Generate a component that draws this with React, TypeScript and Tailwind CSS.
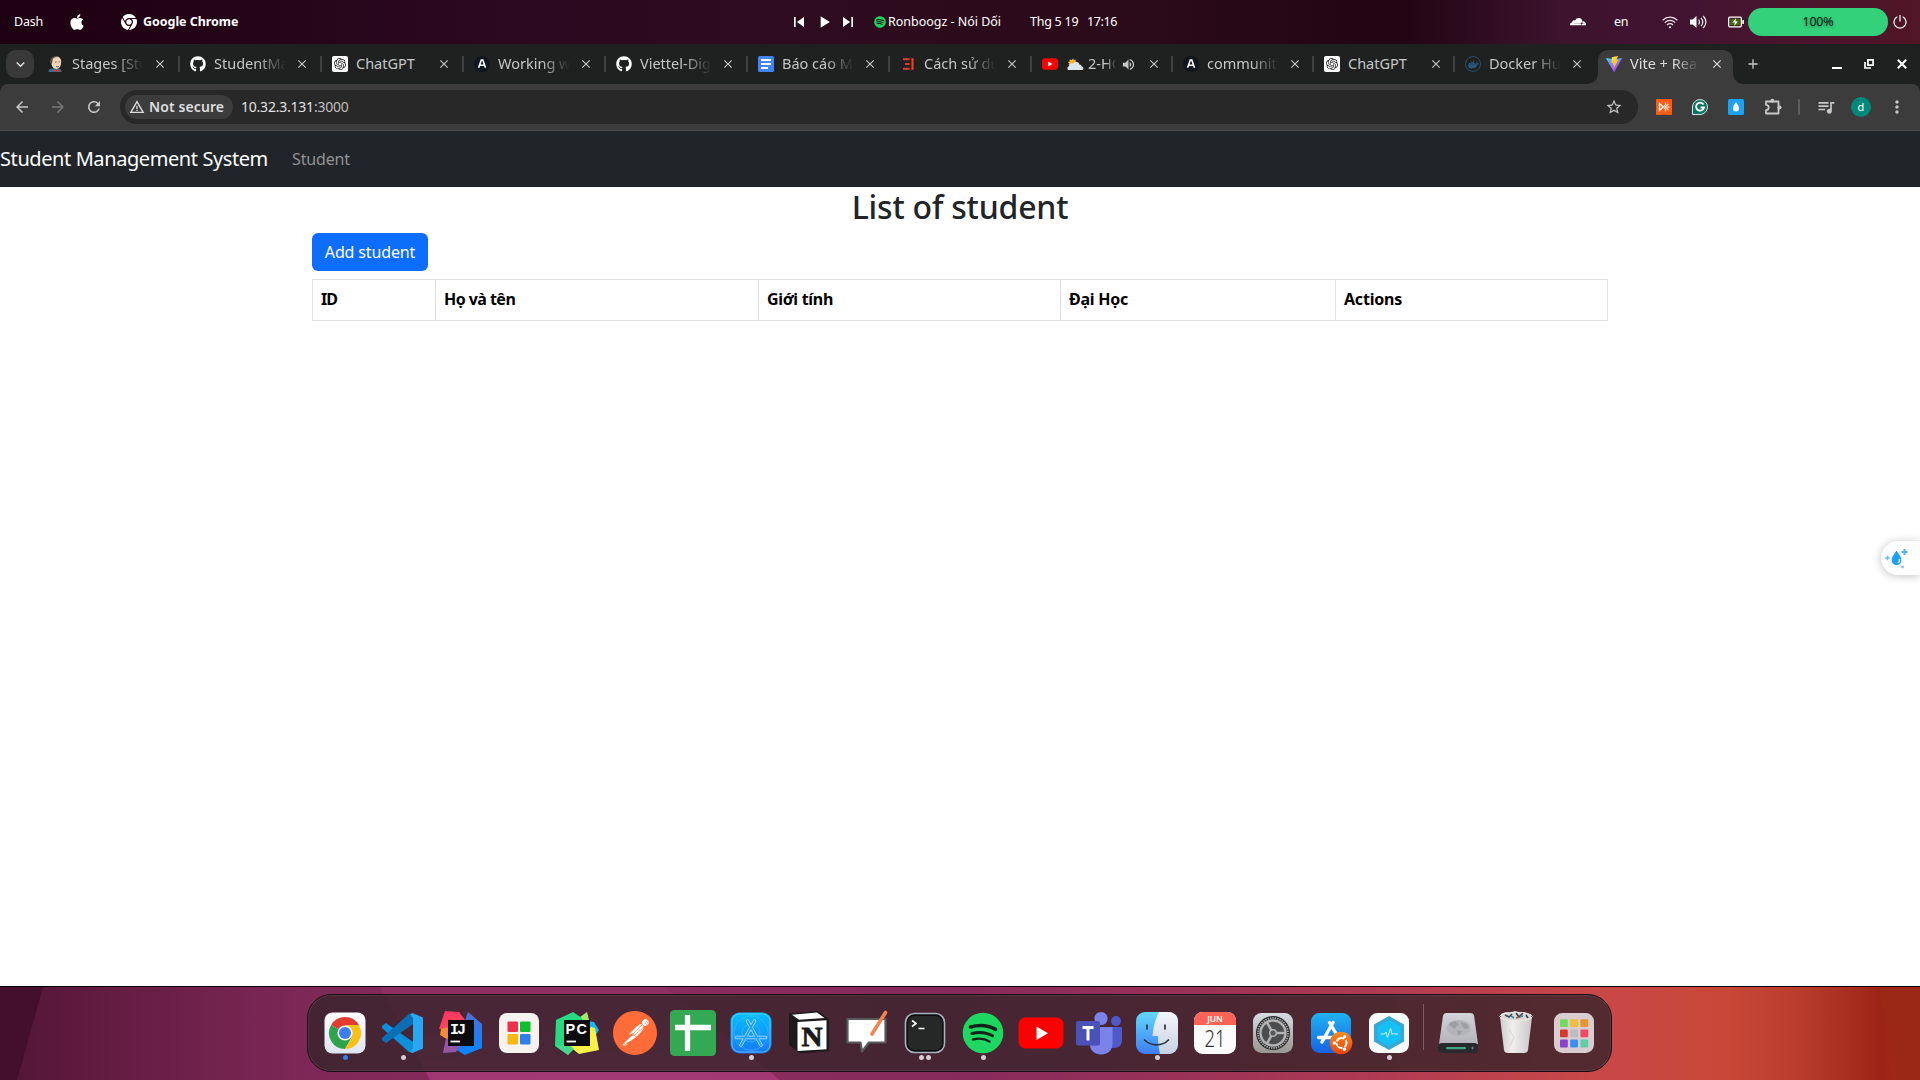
import React from "react";
import { FaApple, FaGithub, FaChrome, FaCloudflare, FaSpotify } from "react-icons/fa6";
import { SiOpenai, SiPostman, SiDocker } from "react-icons/si";
import {
  MdArrowBack, MdArrowForward, MdRefresh, MdStarBorder, MdQueueMusic, MdMoreVert,
  MdSkipPrevious, MdPlayArrow, MdSkipNext, MdClose, MdAdd,
  MdWarningAmber, MdExpandMore, MdVolumeUp,
} from "react-icons/md";

/* ---------- Tab favicons ---------- */

const Jenkins = () => (
  <svg viewBox="0 0 16 16" className="size-4">
    <path d="M.5 16c0-3 2-3.500 5-3.500h5c2 0 3 1.500 3 3.500z" fill="#3d6f8e" />
    <path d="M3.200 4C3.500 1.500 6 .4 8.200.4c3 0 5 2 5 5.200 0 4-1.500 7.400-4.700 7.400C5 13 3 10 3.200 4z" fill="#f0d6b7" />
    <path d="M2.300 7C1.500 3 4 .2 7.500.2c1.500 0 2.500.4 3.200 1C8 .8 5 1.500 4.600 4L4 8z" fill="#5a504b" />
    <path d="M7 6h1.600M10.600 6H12M8 10.300c1 .7 2 .6 3 0" stroke="#5c4c40" strokeWidth=".9" fill="none" />
    <path d="M6.500 13l2.600 1.200 2.700-1.200v3l-2.700-1-2.600 1z" fill="#d33833" />
  </svg>
);

const Astro = () => (
  <span className="flex size-4 items-center justify-center rounded-full bg-[#10161f]">
    <svg viewBox="0 0 16 16" className="size-4">
      <path d="M4.600 11.800L7.300 4h1.500l2.700 7.800M6 9.300h4" stroke="#fff" strokeWidth="1.600" fill="none" />
    </svg>
  </span>
);

const Gpt = () => (
  <span className="flex size-4 items-center justify-center rounded-[2px] bg-white">
    <SiOpenai className="size-3 text-[#222]" />
  </span>
);

const Docs = () => (
  <svg viewBox="0 0 16 16" className="size-4">
    <rect width="16" height="16" rx="1.500" fill="#4285f4" />
    <path d="M3 4h10M3 8h10M3 12h7" stroke="#fff" strokeWidth="1.800" />
  </svg>
);

const Viblo = () => (
  <svg viewBox="0 0 16 16" className="size-4">
    <path d="M3 3.200h6.500M5 8h4.500M3 12.800h6.500" stroke="#e8372c" strokeWidth="2" />
    <path d="M12.500 2.200v11.600" stroke="#f03b30" strokeWidth="2.200" />
  </svg>
);

const YoutubeSmall = () => (
  <svg viewBox="0 0 16 16" className="size-4">
    <rect y="2.300" width="16" height="11.400" rx="3" fill="#f00" />
    <path d="M6.300 5.600v4.800L10.500 8z" fill="#fff" />
  </svg>
);

const Docker = () => (
  <span className="flex size-4 items-center justify-center rounded-full border border-[#245070]">
    <SiDocker className="size-[11px] text-[#2a587a]" />
  </span>
);

const Vite = () => (
  <svg viewBox="0 0 16 16" className="size-4">
    <defs>
      <linearGradient id="vite-a" x1="0" y1="0" x2=".6" y2="1">
        <stop offset="0" stopColor="#41d1ff" />
        <stop offset="1" stopColor="#bd34fe" />
      </linearGradient>
      <linearGradient id="vite-b" x1=".3" y1="0" x2=".6" y2="1">
        <stop offset="0" stopColor="#ffea83" />
        <stop offset=".1" stopColor="#ffdd35" />
        <stop offset="1" stopColor="#ffa800" />
      </linearGradient>
    </defs>
    <path d="M15.900 2.600L8.400 15.800a.4.400 0 0 1-.7 0L.100 2.600c-.2-.3.100-.7.500-.6L8 3.300l7.400-1.300c.4-.1.700.3.500.6z" fill="url(#vite-a)" />
    <path d="M11.500.1L6 1.200a.2.200 0 0 0-.2.200l-.3 5.700c0 .1.100.3.300.2l1.500-.3-.5 2.300c0 .1.100.3.300.2l1-.3-.8 3.500c0 .2.200.4.400.1l4.500-8.700c.1-.1 0-.3-.2-.3l-1.700.3L11.800.400c0-.2-.1-.3-.3-.3z" fill="url(#vite-b)" />
  </svg>
);

const CloudSun = () => (
  <svg viewBox="0 0 17 14" className="h-[14px] w-[17px] shrink-0">
    <path d="M6 1.400l.8 1.700 2-.6-.4 2 1.800 1L5 8.500 1.500 8 2.300 6.500.8 5.200l1.800-.8-.1-2 2 .5z" fill="#f9b52c" />
    <path d="M1.500 13C0 12.500 0 9.500 2 9.200 2.300 6.500 4.500 5.500 6.200 6.800c1.200-3 5.500-2.700 6.200.8 1.600 0 2.300 1 2.300 2C17 10 17 13 15 13z" fill="#dfe6ea" />
  </svg>
);

type Tab = { title: string; icon: React.ReactNode; wide?: boolean; emoji?: boolean };

const tabs: Tab[] = [
  { title: "Stages [Stu", icon: <Jenkins />, wide: true },
  { title: "StudentMa", icon: <FaGithub className="size-4 text-white" />, wide: true },
  { title: "ChatGPT", icon: <Gpt />, wide: true },
  { title: "Working w", icon: <Astro />, wide: true },
  { title: "Viettel-Dig", icon: <FaGithub className="size-4 text-white" />, wide: true },
  { title: "Báo cáo M", icon: <Docs />, wide: true },
  { title: "Cách sử dụ", icon: <Viblo />, wide: true },
  { title: "2-HO", icon: <YoutubeSmall />, emoji: true },
  { title: "community", icon: <Astro /> },
  { title: "ChatGPT", icon: <Gpt /> },
  { title: "Docker Hu", icon: <Docker /> },
];

const fade = "overflow-hidden whitespace-nowrap [mask-image:linear-gradient(to_right,#000_60%,transparent_98%)]";

const TabItem = ({ tab, last }: { tab: Tab; last: boolean }) => (
  <div className={`relative flex h-10 items-center pl-[10px] ${tab.wide ? "w-[142px]" : "w-[141px]"}`}>
    {tab.icon}
    {tab.emoji ? (
      <>
        <span className="ml-[9px] flex"><CloudSun /></span>
        <span className={`ml-1 w-[29px] ${fade}`}>{tab.title}</span>
        <MdVolumeUp className="ml-[4px] size-[15px] text-[#c7c7c7]" />
        <MdClose className="ml-[11px] size-[14px]" />
      </>
    ) : (
      <>
        <span className={`ml-2 w-[73px] ${tab.title === "ChatGPT" ? "whitespace-nowrap" : fade}`}>{tab.title}</span>
        <MdClose className="ml-[8px] size-[14px]" />
      </>
    )}
    {!last && <span className="absolute top-[12px] right-0 h-4 w-[2px] bg-[#3f4140]" />}
  </div>
);

/* ---------- System bar ---------- */

const TopBar = () => (
  <div className="flex h-11 items-center bg-[linear-gradient(90deg,#1d0011_0px,#230216_180px,#2b0820_480px,#2e0b1f_780px,#2b0a19_1150px,#210513_1400px,#3d132d_1560px,#421432_1680px,#511627_1920px)] text-[12.5px] text-white">
    <div className="flex w-[793px] items-center">
      <span className="ml-[14px] w-[54px] tracking-[-0.25px]">Dash</span>
      <FaApple className="size-[18px]" />
      <FaChrome className="ml-[35px] size-4" />
      <span className="ml-[6px] font-bold tracking-[-0.05px]">Google Chrome</span>
    </div>
    <MdSkipPrevious className="-ml-1 size-5" />
    <MdPlayArrow className="ml-[5px] size-5" />
    <MdSkipNext className="ml-[4px] size-5" />
    <FaSpotify className="ml-[16px] size-3 text-[#1ed05c]" />
    <span className="ml-[2px] w-[142px] tracking-[-0.02px] whitespace-nowrap">Ronboogz - Nói Dối</span>
    <span className="w-[57px] tracking-[-0.25px]">Thg 5 19</span>
    <span className="tracking-[-0.4px]">17:16</span>
    <div className="ml-auto flex items-center">
      <FaCloudflare className="size-4" />
      <span className="ml-7 w-[48px] tracking-[-0.4px]">en</span>
      <svg viewBox="0 0 16 13" className="h-[13px] w-4" fill="none" stroke="#f3e8ee" strokeWidth="1.200">
        <path d="M.6 4.200c4.500-4 10.300-4 14.800 0M2.800 6.600c3.200-2.800 7.200-2.800 10.400 0M5 9c2-1.700 4-1.700 6 0" />
        <circle cx="8" cy="11.300" r="1" fill="#fff" stroke="none" />
      </svg>
      <svg viewBox="0 0 17 14" className="ml-3 h-[14px] w-[17px]" fill="none" stroke="#f3e8ee" strokeWidth="1.200">
        <path d="M0 4.500h2.500L6.500 1v12l-4-3.500H0z" fill="#fff" stroke="none" />
        <path d="M8.500 4.500c1.200 1.500 1.200 3.500 0 5M11 2.800c2.200 2.600 2.200 5.800 0 8.400M13.300 1c3.200 3.700 3.200 8.300 0 12" />
      </svg>
      <svg viewBox="0 0 16 12" className="ml-[21px] h-3 w-4">
        <rect x=".7" y="1.200" width="12.600" height="9.600" rx="1" fill="none" stroke="#fff" strokeWidth="1.300" />
        <rect x="2.300" y="2.700" width="9.400" height="6.600" fill="#3f6a0c" />
        <path d="M8 2.200L4.400 6.400h2.500L6.200 9.900l3.700-4.300H7.400z" fill="#fff" />
        <rect x="14.300" y="4" width="1.600" height="4" fill="#fff" />
      </svg>
      <span className="ml-1 flex h-7 w-[140px] items-center justify-center rounded-full bg-[#33d17a] tracking-[-0.2px] text-[#0b2415] [text-shadow:0_1px_3px_rgba(0,0,0,0.4)]">100%</span>
      <svg viewBox="0 0 14 14" className="mr-[13px] ml-[5px] size-[14px]" fill="none" stroke="#fff" strokeWidth="1.200">
        <path d="M4.300 1.800a6 6 0 1 0 5.400 0M7 0v6.500" />
      </svg>
    </div>
  </div>
);

/* ---------- Browser chrome ---------- */

const TabStrip = () => (
  <div className="flex h-10 bg-[#1f2120] text-[14.5px] text-[#c4c7c5]">
    <span className="mt-[6px] ml-[6px] flex size-7 items-center justify-center rounded-[10px] bg-[#393939]">
      <MdExpandMore className="size-[17px] text-[#e3e3e3]" />
    </span>
    <div className="ml-1 flex">
      {tabs.map((t, i) => <TabItem key={i} tab={t} last={i === tabs.length - 1} />)}
    </div>
    <div className="relative ml-[2px] mt-[6px] flex h-[34px] w-[135px] items-center rounded-t-[10px] bg-[#3c3c3c] pb-[6px] pl-[8px] text-[#dedede]">
      <span className="absolute bottom-0 -left-[10px] size-[10px] bg-[radial-gradient(circle_at_0_0,transparent_9.5px,#3c3c3c_10px)]" />
      <span className="absolute -right-[10px] bottom-0 size-[10px] bg-[radial-gradient(circle_at_100%_0,transparent_9.5px,#3c3c3c_10px)]" />
      <Vite />
      <span className={`ml-2 w-[71px] ${fade}`}>Vite + Rea</span>
      <MdClose className="ml-[9px] size-[14px]" />
    </div>
    <MdAdd className="mt-[12px] ml-[12px] size-4" />
    <div className="mr-[13px] ml-auto flex items-center text-white">
      <span className="mt-[8px] h-[2px] w-[10px] bg-white" />
      <svg viewBox="0 0 10 10" className="ml-[22px] size-[10px]" fill="none" stroke="#fff" strokeWidth="1.700">
        <path d="M3.900.9h5.200v5.200H3.900zM1 3v6h6" />
      </svg>
      <svg viewBox="0 0 10 10" className="ml-[23px] size-[10px]" stroke="#fff" strokeWidth="2">
        <path d="M.8.8l8.400 8.400M9.200.8L.8 9.200" />
      </svg>
    </div>
  </div>
);

const Toolbar = () => (
  <div className="bg-[#1f2120]">
    <div className="flex h-[47px] items-center rounded-t-[8px] border-b border-[#4a4a4a] bg-[#3c3c3c] text-[#c7c7c7]">
      <MdArrowBack className="ml-[13px] size-[18px]" />
      <MdArrowForward className="ml-[18px] size-[18px] text-[#777]" />
      <MdRefresh className="ml-[18px] size-[18px]" />
      <div className="ml-[17px] flex h-[34px] w-[1518px] items-center rounded-full bg-[#282828] pl-[5px]">
        <span className="flex h-6 w-[108px] items-center rounded-full bg-[#3c3c3c] pb-px pl-[4px] text-[14px] font-semibold tracking-[0.1px] whitespace-nowrap text-[#dfdfdf]">
          <MdWarningAmber className="mr-1 mt-px size-4" />
          Not secure
        </span>
        <span className="ml-[8px] pb-[2px] text-[14px] tracking-[-0.22px] text-[#e0e0e0]">10.32.3.131<span className="text-[#bdbdbd]">:3000</span></span>
        <MdStarBorder className="mr-[15px] ml-auto size-[18px]" />
      </div>
      <svg viewBox="0 0 16 16" className="ml-[18px] size-4">
        <rect width="16" height="16" rx="1" fill="#ff5c12" />
        <path d="M3.500 4.500L7.300 8l-3.800 3.500z" fill="none" stroke="#fff" strokeWidth="1.400" />
        <path d="M9.500 3.500v2.800M9.500 9.700v2.800M10.800 8h2.700M10.500 6.800l2-2M10.500 9.200l2 2M8.300 6.500L9.800 8 8.300 9.500" stroke="#fff" strokeWidth="1.200" fill="none" />
      </svg>
      <svg viewBox="0 0 16 16" className="ml-5 size-4">
        <path d="M.5 15.500V8A7.500 7.500 0 1 1 8 15.500z" fill="#0d7462" stroke="#d5e6e2" />
        <path d="M11.500 5.500A4 4 0 1 0 12 8.500H8.500" stroke="#fff" strokeWidth="1.800" fill="none" />
      </svg>
      <svg viewBox="0 0 16 16" className="ml-5 size-4">
        <rect width="16" height="16" rx="1.500" fill="#1da1f5" />
        <path d="M8 3c1.500 2.500 3 4 3 6.500a3 3 0 0 1-6 0C5 7 6.500 5.500 8 3z" fill="#fff" />
      </svg>
      <svg viewBox="0 0 18 18" className="ml-5 size-[18px]">
        <path d="M2 3.500h12.500v12H2v-3.300a2.700 2.700 0 0 0 0-5.400z" fill="none" stroke="#c7c7c7" strokeWidth="1.800" strokeLinejoin="round" />
        <circle cx="8.300" cy="2.700" r="2" fill="#c7c7c7" />
        <circle cx="15.500" cy="9.500" r="2" fill="#c7c7c7" />
      </svg>
      <span className="ml-[16px] h-4 w-[2px] rounded bg-[#5e5e5e]" />
      <MdQueueMusic className="ml-[16px] size-5" />
      <span className="ml-[15px] flex size-5 items-center justify-center rounded-full bg-[#00897b] text-[11px] text-white">d</span>
      <MdMoreVert className="ml-4 size-5" />
    </div>
  </div>
);

/* ---------- Web page ---------- */

const headings = [
  { label: "ID", cls: "w-[123px] tracking-[-0.9px]" },
  { label: "Họ và tên", cls: "w-[323px] tracking-[-0.55px]" },
  { label: "Giới tính", cls: "w-[302px] tracking-[-0.3px]" },
  { label: "Đại Học", cls: "w-[275px] tracking-[-0.25px]" },
  { label: "Actions", cls: "tracking-[-0.2px]" },
];

const Page = () => (
  <div className="relative h-[855px] bg-white">
    <nav className="flex h-14 items-center bg-[#212529] pb-px">
      <span className="w-[292px] text-[20px] tracking-[-0.41px] text-white">Student Management System</span>
      <span className="text-base tracking-[-0.15px] text-[#909294]">Student</span>
    </nav>
    <main className="mx-auto w-[1296px]">
      <h2 className="mb-2 h-[38px] text-center text-[32px] leading-[39px] font-medium tracking-[-0.2px] text-[#212529]">List of student</h2>
      <button className="block h-[38px] w-[116px] rounded-md bg-[#0d6efd] text-base tracking-[-0.15px] text-white">Add student</button>
      <table className="mt-2 w-full table-fixed border-collapse text-base text-black">
        <thead>
          <tr>
            {headings.map((h) => (
              <th key={h.label} className={`h-[41px] border border-[#dee2e6] px-2 pb-[2px] text-left font-bold ${h.cls}`}>{h.label}</th>
            ))}
          </tr>
        </thead>
      </table>
    </main>
    <div className="absolute top-[410px] right-0 flex h-[34px] w-[39px] items-center rounded-l-full bg-white pl-[4px] shadow-[0_1px_8px_rgba(0,0,0,0.25)]">
      <svg viewBox="0 0 24 22" className="h-[22px] w-6">
        <path d="M11.500 3.500c2 3.500 4.900 6 4.900 9.800a4.900 4.900 0 0 1-9.800 0C6.600 9.500 9.500 7 11.500 3.500z" fill="#1da1f2" />
        <path d="M14.300 12c.6 1.800-.1 3.300-1.600 4" stroke="#fff" strokeWidth="1.200" fill="none" />
        <path d="M19.500 2v6M16.500 5h6" stroke="#4fb5f5" strokeWidth="2" />
        <path d="M2.500 8.700v4.600M.2 11h4.600" stroke="#6ac0f7" strokeWidth="1.700" />
        <circle cx="17.500" cy="20" r="1.400" fill="#7cc8f8" />
      </svg>
    </div>
  </div>
);

/* ---------- Dock icons, drawn on a 48px grid ---------- */

const Icon = ({ children }: { children: React.ReactNode }) => (
  <svg viewBox="0 0 48 48" className="size-12">{children}</svg>
);

const Chrome = () => (
  <Icon>
    <defs><linearGradient id="chr" x2="0" y2="1"><stop stopColor="#fff" /><stop offset="1" stopColor="#dfe4f3" /></linearGradient></defs>
    <rect x="3.500" y="3.500" width="41" height="41" rx="8" fill="url(#chr)" />
    <path d="M24 24L10.140 16A16 16 0 0 1 37.860 16z" fill="#e33b2e" />
    <path d="M10.140 16A16 16 0 0 0 24 40l7-12-7-4z" fill="#2fa24c" />
    <path d="M37.860 16A16 16 0 0 1 24 40l7-12-7-12z" fill="#fbc116" />
    <circle cx="24" cy="24" r="7.600" fill="#fff" />
    <circle cx="24" cy="24" r="6" fill="#3b7ded" />
  </Icon>
);

const Code = () => (
  <Icon>
    <path d="M7 14L3 17v2l27 24 4 1V33z" fill="#0d8fdc" />
    <path d="M34 4l-4 1L3 29v2l4 3 27-19z" fill="#0b6fb5" />
    <path d="M33.500 4L44 8.500v31L33.500 44 31 42.500l3-3v-31l-3-3z" fill="#29a8f2" />
  </Icon>
);

const Intellij = () => (
  <Icon>
    <defs>
      <linearGradient id="ij1" x2=".4" y2="1"><stop stopColor="#fe2f6a" /><stop offset="1" stopColor="#fc4a52" /></linearGradient>
      <linearGradient id="ij2" x2=".2" y2="1"><stop stopColor="#5b6ad0" /><stop offset="1" stopColor="#0c83fa" /></linearGradient>
    </defs>
    <path d="M31 3L45 15v24L28 46 18 40z" fill="url(#ij2)" />
    <path d="M8 2l14 1 6 8-12 9H2z" fill="url(#ij1)" />
    <path d="M4 20l9-2v14l-10-6z" fill="#f48b35" />
    <path d="M9 29l14 7-4 7-13 1z" fill="#9556a8" />
    <rect x="11" y="11" width="26" height="26" fill="#0c0c0e" />
    <text x="13" y="25" fontSize="15" fontWeight="700" fill="#fff" fontFamily="Liberation Mono" textLength="16">IJ</text>
    <path d="M13.500 32.500h9.500" stroke="#fff" strokeWidth="1.800" />
  </Icon>
);

const Squares = () => (
  <Icon>
    <rect x="4" y="4" width="40" height="40" rx="8" fill="#f5f2f0" />
    <rect x="12.500" y="12.500" width="10.500" height="10.500" rx="1" fill="#f0314b" />
    <rect x="25" y="12.500" width="10.500" height="10.500" rx="1" fill="#0fbf2c" />
    <rect x="12.500" y="25" width="10.500" height="10.500" rx="1" fill="#fdb713" />
    <rect x="25" y="25" width="10.500" height="10.500" rx="1" fill="#2f7fe6" />
  </Icon>
);

const Pycharm = () => (
  <Icon>
    <path d="M34 3l3 12-10 4-4-8z" fill="#a5e86a" />
    <path d="M3 11L20 3l9 6 2 8-16 29-13-9z" fill="#27da84" />
    <path d="M34 12l7 1 5 8-6 9z" fill="#16b8ee" />
    <path d="M38 18l4 1 4 22-20 4-10-8z" fill="#f9f04a" />
    <path d="M3 37l12-2 6 5-6 6z" fill="#48d68b" />
    <rect x="11" y="11" width="26" height="26" fill="#0c0c0e" />
    <text x="12.500" y="24.500" fontSize="14.500" fontWeight="700" fill="#fff" fontFamily="Liberation Sans" textLength="21.500">PC</text>
    <path d="M13.500 32.500h9.500" stroke="#fff" strokeWidth="1.800" />
  </Icon>
);

const Postman = () => (
  <span className="flex size-12 items-center justify-center">
    <span className="flex size-[42px] rounded-full bg-white">
      <SiPostman className="-m-px size-[44px] shrink-0 text-[#ff6c37]" />
    </span>
  </span>
);

const Sheets = () => (
  <Icon>
    <rect x="1" y="1" width="46" height="46" rx="4.500" fill="#34a853" />
    <path d="M18.500 6v36M6 18.500h36" stroke="#fff" strokeWidth="5.300" />
  </Icon>
);

const Xcode = () => (
  <Icon>
    <defs><linearGradient id="xc" x2="0" y2="1"><stop stopColor="#06c0fb" /><stop offset="1" stopColor="#1578fb" /></linearGradient></defs>
    <rect x="3.500" y="3.500" width="41" height="41" rx="9" fill="url(#xc)" />
    <rect x="5" y="5" width="38" height="38" rx="7.500" fill="none" stroke="#7ad6ff" strokeWidth=".7" />
    <circle cx="24" cy="24" r="17" fill="none" stroke="#5cc3ff" strokeWidth=".5" />
    <circle cx="24" cy="24" r="9" fill="none" stroke="#5cc3ff" strokeWidth=".5" />
    <path d="M27.500 12L14 36M20.500 12L34 36M9.500 28.500h29" stroke="#aee3ff" strokeWidth="3.400" strokeLinecap="round" />
    <path d="M27.500 12L14 36M20.500 12L34 36M9.500 28.500h29" stroke="#22a0fa" strokeWidth="1.900" strokeLinecap="round" />
  </Icon>
);

const Notion = () => (
  <Icon>
    <path d="M4 4.500L33 2l11 8v32l-29 2.500L4 36z" fill="#1c1a1a" />
    <path d="M7 5.800L32 3.600l7.500 5.300L14 10.700z" fill="#fff" />
    <path d="M12.500 13l29-1.800v29L12.500 42z" fill="#fff" />
    <text x="16.500" y="36.500" fontSize="28" fontWeight="700" fill="#1c1a1a" stroke="#1c1a1a" strokeWidth=".8" fontFamily="Liberation Serif" textLength="21" lengthAdjust="spacingAndGlyphs">N</text>
  </Icon>
);

const Whiteboard = () => (
  <Icon>
    <path d="M4.500 10h38v23.500H26l-7 9-1.500-9h-13z" fill="#fff" stroke="#57595b" strokeWidth="2.200" strokeLinejoin="round" />
    <path d="M42.500 3.500L29 25" stroke="#ef8450" strokeWidth="3.600" strokeLinecap="round" />
  </Icon>
);

const Terminal = () => (
  <Icon>
    <rect x="4.500" y="4.500" width="39" height="39" rx="9" fill="#0d0d0d" stroke="#a9b3bb" strokeWidth="1.600" />
    <rect x="7" y="7" width="34" height="34" rx="6.500" fill="#262727" />
    <path d="M11 11.500l4 3-4 3M17.500 19.500h6" stroke="#fff" strokeWidth="1.600" fill="none" />
  </Icon>
);

const Spotify = () => (
  <Icon>
    <circle cx="24" cy="24" r="20.300" fill="#1ed760" />
    <g fill="none" stroke="#15221a" strokeLinecap="round">
      <path d="M11.500 18c9-2.500 18-1.500 25 2.300" strokeWidth="3.600" />
      <path d="M13 24.500c7.500-2 14.500-1.200 20.500 2.200" strokeWidth="3" />
      <path d="M14 30.500c6-1.500 12-.8 16.500 2" strokeWidth="2.400" />
    </g>
  </Icon>
);

const Youtube = () => (
  <Icon>
    <rect x="1.500" y="8.500" width="45" height="31" rx="7" fill="#f00" />
    <path d="M19.500 17.500v13.500L31 24.200z" fill="#fff" />
  </Icon>
);

const Teams = () => (
  <Icon>
    <circle cx="41" cy="12" r="5" fill="#5059c9" />
    <path d="M33 18h14v13c0 5-3 8-8 8h-6z" fill="#5059c9" />
    <circle cx="26" cy="9.500" r="6.600" fill="#7b83eb" />
    <path d="M15 18h22.500v16c0 8-5 11.500-11.500 11.500S14.500 41 15 35z" fill="#7b83eb" />
    <rect x="1" y="12" width="24" height="24.500" rx="2" fill="#4a52b8" />
    <path d="M7.500 18.500h11M13 18.500v13" stroke="#fff" strokeWidth="3" />
  </Icon>
);

const Finder = () => (
  <Icon>
    <defs>
      <linearGradient id="fi1" x2="0" y2="1"><stop stopColor="#62d8fb" /><stop offset="1" stopColor="#3d7df7" /></linearGradient>
      <linearGradient id="fi2" x2="0" y2="1"><stop stopColor="#f4f6fa" /><stop offset="1" stopColor="#c6d1e2" /></linearGradient>
      <clipPath id="fic"><rect x="3" y="3" width="42" height="42" rx="9" /></clipPath>
    </defs>
    <g clipPath="url(#fic)">
      <rect x="3" y="3" width="42" height="42" fill="url(#fi1)" />
      <path d="M26 3c-4 8-6 16-6.500 24H25c0 6 .5 12 2 18h19V3z" fill="url(#fi2)" />
    </g>
    <path d="M14 16v4M32 16v4" stroke="#2b3545" strokeWidth="1.700" strokeLinecap="round" />
    <path d="M11.500 31c7 6.500 17.500 6.500 24 0" stroke="#2b3545" strokeWidth="1.700" fill="none" strokeLinecap="round" />
  </Icon>
);

const Calendar = () => (
  <Icon>
    <rect x="3" y="3" width="42" height="42" rx="8.500" fill="#fcfcfc" />
    <path d="M3 16v-4.500A8.500 8.500 0 0 1 11.500 3h25a8.500 8.500 0 0 1 8.500 8.500V16z" fill="#fb6357" />
    <text x="24" y="12.700" fontSize="8.500" fontWeight="600" fill="#fff" textAnchor="middle" fontFamily="Noto Sans">JUN</text>
    <text x="24" y="38" fontSize="23" fontWeight="300" fill="#333" textAnchor="middle" fontFamily="Noto Sans" textLength="21" lengthAdjust="spacingAndGlyphs">21</text>
  </Icon>
);

const Settings = () => (
  <Icon>
    <defs><linearGradient id="se" x2="0" y2="1"><stop stopColor="#d6dce1" /><stop offset="1" stopColor="#979691" /></linearGradient></defs>
    <rect x="4" y="4" width="40" height="40" rx="8.500" fill="url(#se)" />
    <circle cx="24" cy="24" r="17" fill="#2b2c2e" />
    <circle cx="24" cy="24" r="15" fill="none" stroke="#a6a6a6" strokeWidth="1.800" strokeDasharray="1.400 1" />
    <circle cx="24" cy="24" r="12.500" fill="#4c4d4f" stroke="#b4b4b4" strokeWidth="2.400" />
    <path d="M24 24h12M24 24l-6-10.400M24 24l-6 10.400" stroke="#b4b4b4" strokeWidth="2.400" />
    <circle cx="24" cy="24" r="3.300" fill="#55565a" stroke="#b4b4b4" strokeWidth="1.500" />
  </Icon>
);

const Software = () => (
  <Icon>
    <defs>
      <linearGradient id="so" x2="0" y2="1"><stop stopColor="#1db4f4" /><stop offset="1" stopColor="#1763e3" /></linearGradient>
      <linearGradient id="so2" x2="0" y2="1"><stop stopColor="#fb8a1e" /><stop offset="1" stopColor="#e8430c" /></linearGradient>
    </defs>
    <rect x="4" y="4" width="40" height="40" rx="8.500" fill="url(#so)" />
    <path d="M26 13.500L15 33M22.500 13.500L34 33M11.500 28.500h14" stroke="#fff" strokeWidth="3.400" strokeLinecap="round" />
    <circle cx="34" cy="34" r="11.300" fill="url(#so2)" />
    <circle cx="34.500" cy="34" r="5" fill="none" stroke="#fff" strokeWidth="2" strokeDasharray="8.500 2" strokeDashoffset="4" />
    <g fill="#fff"><circle cx="27.300" cy="34" r="1.700" /><circle cx="37.500" cy="27.700" r="1.700" /><circle cx="37.500" cy="40.300" r="1.700" /></g>
  </Icon>
);

const Monitor = () => (
  <Icon>
    <rect x="4" y="4" width="40" height="40" rx="8.500" fill="#f8f9f9" />
    <path d="M24 7l15 8.500v17L24 41 9 32.500v-17z" fill="#38a7d3" />
    <path d="M24 11l11.500 6.500v13L24 37l-11.500-6.500v-13z" fill="#14c0f8" />
    <path d="M15.500 25h4l1.500-2 1.500 5.500 3-9 1.500 6 1.500-1.500 1 1H33" stroke="#e8faff" strokeWidth=".9" fill="none" />
  </Icon>
);

const Drive = () => (
  <Icon>
    <defs><linearGradient id="dr" x2="0" y2="1"><stop stopColor="#d3d4d9" /><stop offset="1" stopColor="#b2b4ba" /></linearGradient></defs>
    <path d="M12.500 4h24c2 0 3.200 1 3.600 3L44 35H5L9 7c.4-2 1.500-3 3.500-3z" fill="url(#dr)" />
    <rect x="4" y="34" width="40" height="10" rx="4" fill="#27292c" />
    <rect x="12" y="38" width="20" height="2.200" rx="1" fill="#3fa682" />
    <path d="M37 39h3M38.500 37.500v3" stroke="#8d8f92" strokeWidth=".7" />
    <ellipse cx="24.500" cy="19" rx="12" ry="8" fill="#b3b5ba" />
    <path d="M16 14c3-2 6-2 8 0s-1 3-2 4-1 3-3 1-4-2-3-5zM27 13l6 2 2 4-4 1-3-3zM23 21l5 1-1 3-3 1z" fill="#9c9fa4" />
  </Icon>
);

const Trash = () => (
  <Icon>
    <defs><linearGradient id="tr"><stop stopColor="#cfcecc" /><stop offset=".4" stopColor="#f0efee" /><stop offset="1" stopColor="#c9c8c6" /></linearGradient></defs>
    <path d="M9 5l5-2 4 1 5-2 5 2 4-1 7 3v6H9z" fill="#d9d9d8" />
    <path d="M13 6l4 2 3-3M24 4l3 4 4-4M34 6l2 3" stroke="#454648" strokeWidth="1.700" fill="none" />
    <path d="M19 7l3 2M28 8l3-1" stroke="#2f8fae" strokeWidth="1.600" />
    <path d="M24 9l3-1" stroke="#b5532d" strokeWidth="1.600" />
    <path d="M8 8c10 4.500 22 4.500 32 0l-4 33c-.3 2-1.500 3-4 3H16c-2.500 0-3.700-1-4-3z" fill="url(#tr)" />
    <ellipse cx="24" cy="7.500" rx="16.300" ry="4.300" fill="none" stroke="#e9e9e8" strokeWidth="1" />
    <path d="M17 20l5 8-4 9M30 18l-3 10 5 9" stroke="#dddcda" strokeWidth="1.200" fill="none" />
  </Icon>
);

const appColors = ["#6fdb5b", "#f0bd38", "#e8952f", "#d8382c", "#b9bcc0", "#f24766", "#8a3fd0", "#3a8ff0", "#5fcfa5"];
const AppGrid = () => (
  <Icon>
    <rect x="4" y="4" width="40" height="40" rx="8.500" fill="#d9cdd0" />
    {appColors.map((c, i) => (
      <rect key={c} x={10 + (i % 3) * 10.2} y={10.2 + Math.floor(i / 3) * 10.2} width="7.800" height="7.800" rx="1" fill={c} />
    ))}
  </Icon>
);

const apps: { icon: React.ReactNode; dots?: number; active?: boolean }[] = [
  { icon: <Chrome />, dots: 1, active: true }, { icon: <Code />, dots: 1 }, { icon: <Intellij /> }, { icon: <Squares /> },
  { icon: <Pycharm /> }, { icon: <Postman /> }, { icon: <Sheets /> }, { icon: <Xcode />, dots: 1 }, { icon: <Notion /> },
  { icon: <Whiteboard /> }, { icon: <Terminal />, dots: 2 }, { icon: <Spotify />, dots: 1 }, { icon: <Youtube /> },
  { icon: <Teams /> }, { icon: <Finder />, dots: 1 }, { icon: <Calendar /> }, { icon: <Settings /> }, { icon: <Software /> },
  { icon: <Monitor />, dots: 1 },
];

const Wallpaper = () => (
  <svg viewBox="0 0 1920 93" preserveAspectRatio="none" className="absolute inset-0 size-full">
    <defs>
      <linearGradient id="wall" gradientUnits="userSpaceOnUse" x1="0" x2="1920" y1="0" y2="0">
        <stop offset="0" stopColor="#501636" />
        <stop offset=".06" stopColor="#641c42" />
        <stop offset=".16" stopColor="#7e2858" />
        <stop offset=".3" stopColor="#8b2d5e" />
        <stop offset=".5" stopColor="#862a5c" />
        <stop offset=".62" stopColor="#9b3257" />
        <stop offset=".72" stopColor="#b03b52" />
        <stop offset=".83" stopColor="#c94848" />
        <stop offset=".9" stopColor="#c84737" />
        <stop offset=".94" stopColor="#b83b2c" />
        <stop offset=".98" stopColor="#9c2416" />
        <stop offset="1" stopColor="#a32e1c" />
      </linearGradient>
      <linearGradient id="band" x2="0" y2="1">
        <stop stopColor="#8f3062" />
        <stop offset="1" stopColor="#a63a78" />
      </linearGradient>
    </defs>
    <rect width="1920" height="93" fill="url(#wall)" />
    <path d="M0 0h43L17 93H0z" fill="#430f2d" />
    <path d="M380 0h285l115 93H430z" fill="url(#band)" fillOpacity=".85" />
    <path d="M1878 0h42v93h-22z" fill="#9b2716" />
  </svg>
);

const Desktop = () => (
  <div className="relative flex h-[94px] border-t border-black pt-[7px] pl-[307px]">
    <Wallpaper />
    <div className="relative flex h-[78px] w-[1305px] rounded-[24px] border border-[#1b0d15] bg-[rgba(56,36,42,0.81)] pt-[14px] pl-[8px] shadow-[inset_0_0_0_1px_rgba(255,255,255,0.08)]">
      {apps.map((a, i) => (
        <div key={i} className="flex w-[58px] shrink-0 flex-col items-center">
          {a.icon}
          <div className="-mt-[2px] flex h-[5px] gap-[2px]">
            {Array.from({ length: a.dots ?? 0 }, (_, d) => (
              <span key={d} className={`size-[5px] rounded-full ${a.active ? "bg-[#3584e4]" : "bg-[#d9ccd3]"}`} />
            ))}
          </div>
        </div>
      ))}
      <span className="-mt-[5px] mr-[5px] ml-[5px] h-[46px] w-px bg-white/25" />
      <div className="w-[58px] pl-[5px]"><Drive /></div>
      <div className="w-[58px] pl-[5px]"><Trash /></div>
      <div className="w-[58px] pl-[5px]"><AppGrid /></div>
    </div>
  </div>
);

export default function App() {
  return (
    <div className="h-[1080px] w-[1920px] overflow-hidden font-['Noto_Sans',sans-serif]">
      <TopBar />
      <TabStrip />
      <Toolbar />
      <Page />
      <Desktop />
    </div>
  );
}
